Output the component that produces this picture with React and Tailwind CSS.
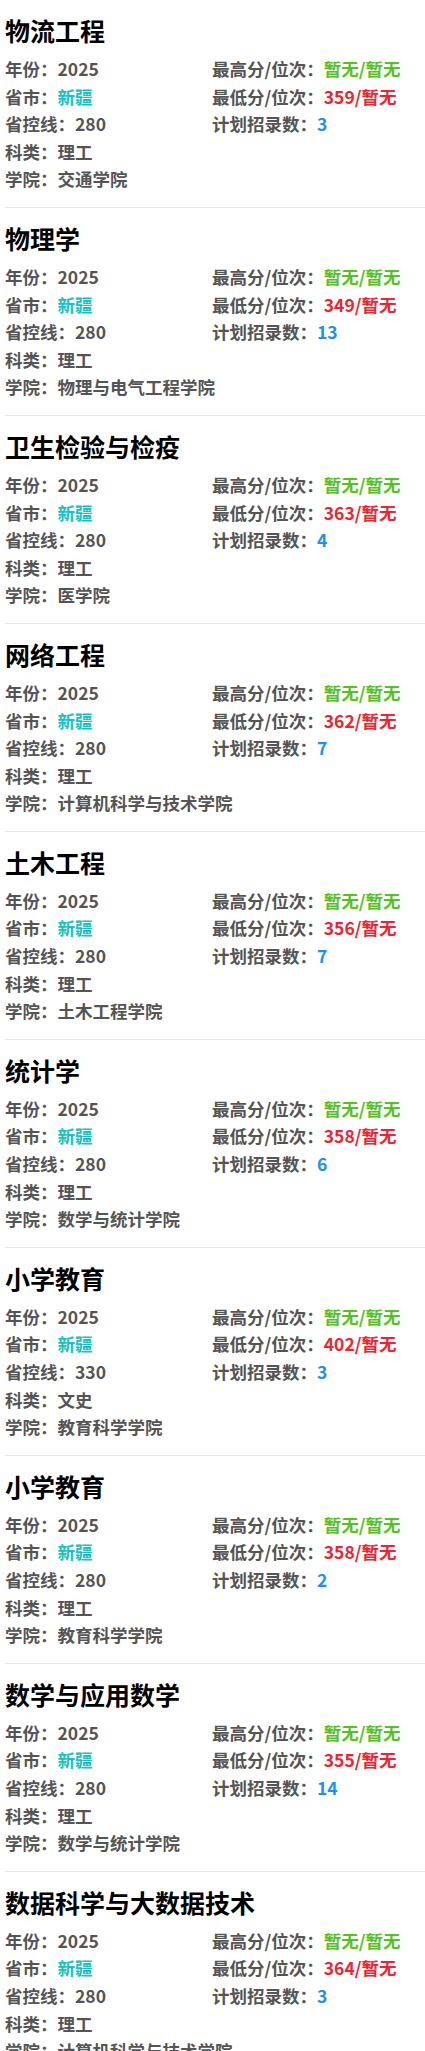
const majors = [
  { name: "物流工程", line: "280", type: "理工", school: "交通学院", low: "359", plan: 3 },
  { name: "物理学", line: "280", type: "理工", school: "物理与电气工程学院", low: "349", plan: 13 },
  { name: "卫生检验与检疫", line: "280", type: "理工", school: "医学院", low: "363", plan: 4 },
  { name: "网络工程", line: "280", type: "理工", school: "计算机科学与技术学院", low: "362", plan: 7 },
  { name: "土木工程", line: "280", type: "理工", school: "土木工程学院", low: "356", plan: 7 },
  { name: "统计学", line: "280", type: "理工", school: "数学与统计学院", low: "358", plan: 6 },
  { name: "小学教育", line: "330", type: "文史", school: "教育科学学院", low: "402", plan: 3 },
  { name: "小学教育", line: "280", type: "理工", school: "教育科学学院", low: "358", plan: 2 },
  { name: "数学与应用数学", line: "280", type: "理工", school: "数学与统计学院", low: "355", plan: 14 },
  { name: "数据科学与大数据技术", line: "280", type: "理工", school: "计算机科学与技术学院", low: "364", plan: 3 },
];

function Row({ label, children, valueClass = "text-[#555]" }) {
  return (
    <div className="flex whitespace-nowrap">
      <span>{label}：</span>
      <span className={valueClass}>{children}</span>
    </div>
  );
}

function MajorCard({ m }) {
  return (
    <div className="ml-[5px] pt-[12px] pb-[14px] border-b border-[#e8e8e8]">
      {/* Title */}
      <h2 className="text-[25px] leading-[36px] font-bold text-black">{m.name}</h2>

      {/* Info */}
      <div className="mt-[7px] grid grid-cols-[207px_1fr] text-[17.5px] leading-[27.6px] font-semibold text-[#555]">
        <div className="flex flex-col">
          <Row label="年份">2025</Row>
          <Row label="省市" valueClass="text-[#13c2c2]">新疆</Row>
          <Row label="省控线">{m.line}</Row>
          <Row label="科类">{m.type}</Row>
          <Row label="学院">{m.school}</Row>
        </div>
        <div className="flex flex-col">
          <Row label="最高分/位次" valueClass="text-[#52c41a]">暂无/暂无</Row>
          <Row label="最低分/位次" valueClass="text-[#f5222d]">{m.low}/暂无</Row>
          <Row label="计划招录数" valueClass="text-[#1890ff]">{m.plan}</Row>
        </div>
      </div>
    </div>
  );
}

export default function App() {
  return (
    <div className="bg-white min-h-screen" style={{ fontFamily: '"Noto Sans CJK SC", "Noto Sans", sans-serif' }}>
      {majors.map((m, i) => (
        <MajorCard key={i} m={m} />
      ))}
    </div>
  );
}
